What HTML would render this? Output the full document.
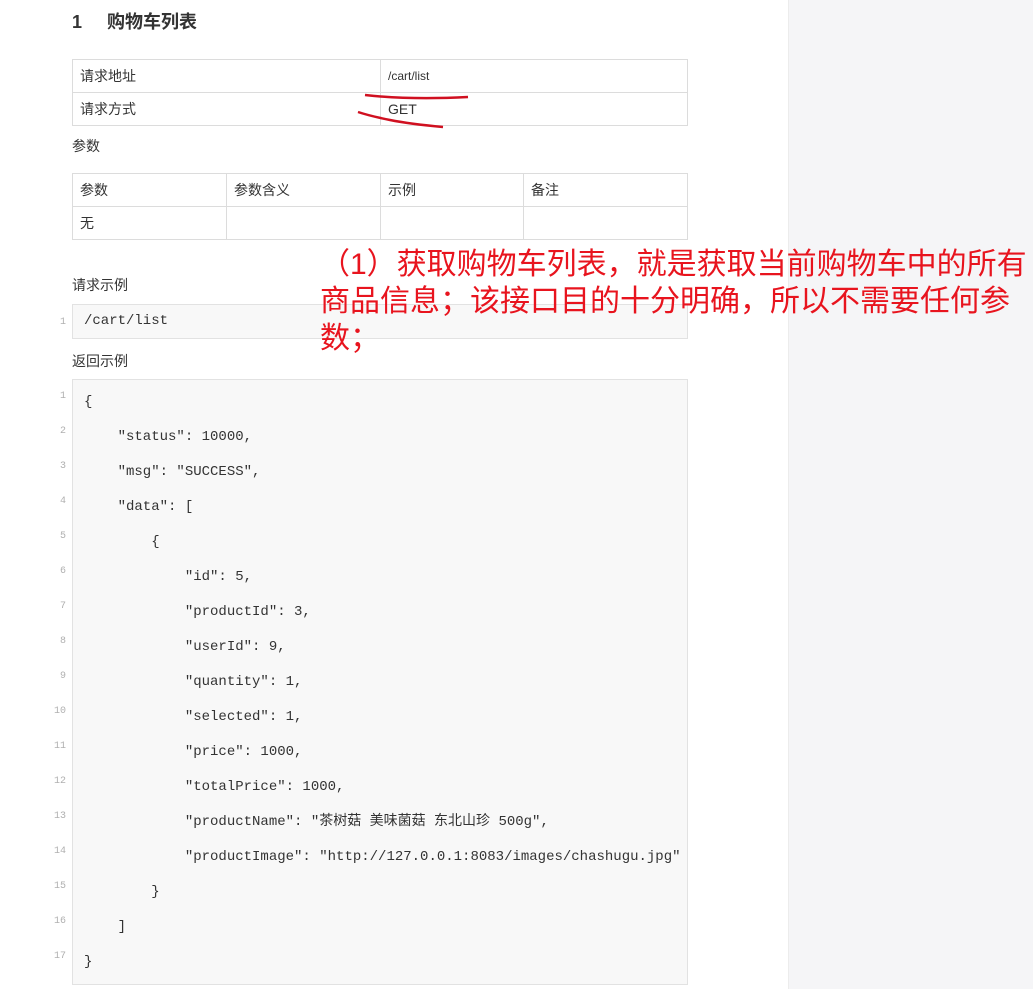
<!DOCTYPE html>
<html><head><meta charset="utf-8"><style>
body{margin:0;width:1033px;height:989px;background:#fff;position:relative;overflow:hidden;font-family:"Liberation Sans","Noto Sans CJK SC",sans-serif;color:#333}
.side{position:absolute;left:788px;top:0;width:245px;height:989px;background:#f5f5f7;border-left:1px solid #ececec}
.a{position:absolute;white-space:nowrap}
table{position:absolute;border-collapse:collapse;font-size:14px;color:#333}
td{border:1px solid #dcdcdc;padding:0 7px;height:33px;box-sizing:border-box}
.code{position:absolute;left:72px;width:616px;background:#f8f8f8;border:1px solid #e2e2e2;box-sizing:border-box}
.ln{position:absolute;font-family:"Liberation Mono",monospace;font-size:10px;color:#b0b0b0;width:14px;text-align:right;left:52px}
.cl{position:absolute;left:84px;font-family:"Liberation Mono","Noto Sans CJK SC",monospace;font-size:14px;line-height:16px;height:16px;color:#333;white-space:pre}
.red{position:absolute;left:320px;color:#e8141e;font-size:30px;line-height:37px;font-family:"Liberation Sans","Noto Sans CJK SC",sans-serif;white-space:nowrap}
</style></head><body>
<div class="side"></div>
<div class="a" style="left:72px;top:8px;font-size:18px;font-weight:bold;color:#333">1&nbsp;&nbsp;&nbsp;&nbsp;&nbsp;购物车列表</div>
<table style="left:72px;top:59px;width:616px">
<tr><td style="width:308px">请求地址</td><td style="font-size:12px">/cart/list</td></tr>
<tr><td>请求方式</td><td>GET</td></tr>
</table>
<svg class="a" style="left:350px;top:90px" width="130" height="45"><path d="M15 5 Q60 10 118 7" stroke="#d01020" stroke-width="2.5" fill="none"/><path d="M8 22 Q20 26 40 30 Q60 34 93 37" stroke="#d01020" stroke-width="2.5" fill="none"/></svg>
<div class="a" style="left:72px;top:136px;font-size:14px">参数</div>
<table style="left:72px;top:173px;width:616px">
<tr><td style="width:154px">参数</td><td style="width:154px">参数含义</td><td style="width:143px">示例</td><td>备注</td></tr>
<tr><td>无</td><td></td><td></td><td></td></tr>
</table>
<div class="a" style="left:72px;top:275px;font-size:14px">请求示例</div>
<div class="code" style="top:304px;height:35px"></div>
<div class="ln" style="top:317px">1</div>
<div class="cl" style="top:313px">/cart/list</div>
<div class="a" style="left:72px;top:351px;font-size:14px">返回示例</div>
<div class="code" style="top:379px;height:606px"></div>
<div class="ln" style="top:391px">1</div><div class="cl" style="top:394px">{</div>
<div class="ln" style="top:426px">2</div><div class="cl" style="top:429px">    "status": 10000,</div>
<div class="ln" style="top:461px">3</div><div class="cl" style="top:464px">    "msg": "SUCCESS",</div>
<div class="ln" style="top:496px">4</div><div class="cl" style="top:499px">    "data": [</div>
<div class="ln" style="top:531px">5</div><div class="cl" style="top:534px">        {</div>
<div class="ln" style="top:566px">6</div><div class="cl" style="top:569px">            "id": 5,</div>
<div class="ln" style="top:601px">7</div><div class="cl" style="top:604px">            "productId": 3,</div>
<div class="ln" style="top:636px">8</div><div class="cl" style="top:639px">            "userId": 9,</div>
<div class="ln" style="top:671px">9</div><div class="cl" style="top:674px">            "quantity": 1,</div>
<div class="ln" style="top:706px">10</div><div class="cl" style="top:709px">            "selected": 1,</div>
<div class="ln" style="top:741px">11</div><div class="cl" style="top:744px">            "price": 1000,</div>
<div class="ln" style="top:776px">12</div><div class="cl" style="top:779px">            "totalPrice": 1000,</div>
<div class="ln" style="top:811px">13</div><div class="cl" style="top:814px">            "productName": "茶树菇 美味菌菇 东北山珍 500g",</div>
<div class="ln" style="top:846px">14</div><div class="cl" style="top:849px">            "productImage": "http://127.0.0.1:8083/images/chashugu.jpg"</div>
<div class="ln" style="top:881px">15</div><div class="cl" style="top:884px">        }</div>
<div class="ln" style="top:916px">16</div><div class="cl" style="top:919px">    ]</div>
<div class="ln" style="top:951px">17</div><div class="cl" style="top:954px">}</div>
<div class="red" style="top:246px">（1）获取购物车列表，就是获取当前购物车中的所有<br>商品信息；该接口目的十分明确，所以不需要任何参<br>数；</div>
</body></html>
